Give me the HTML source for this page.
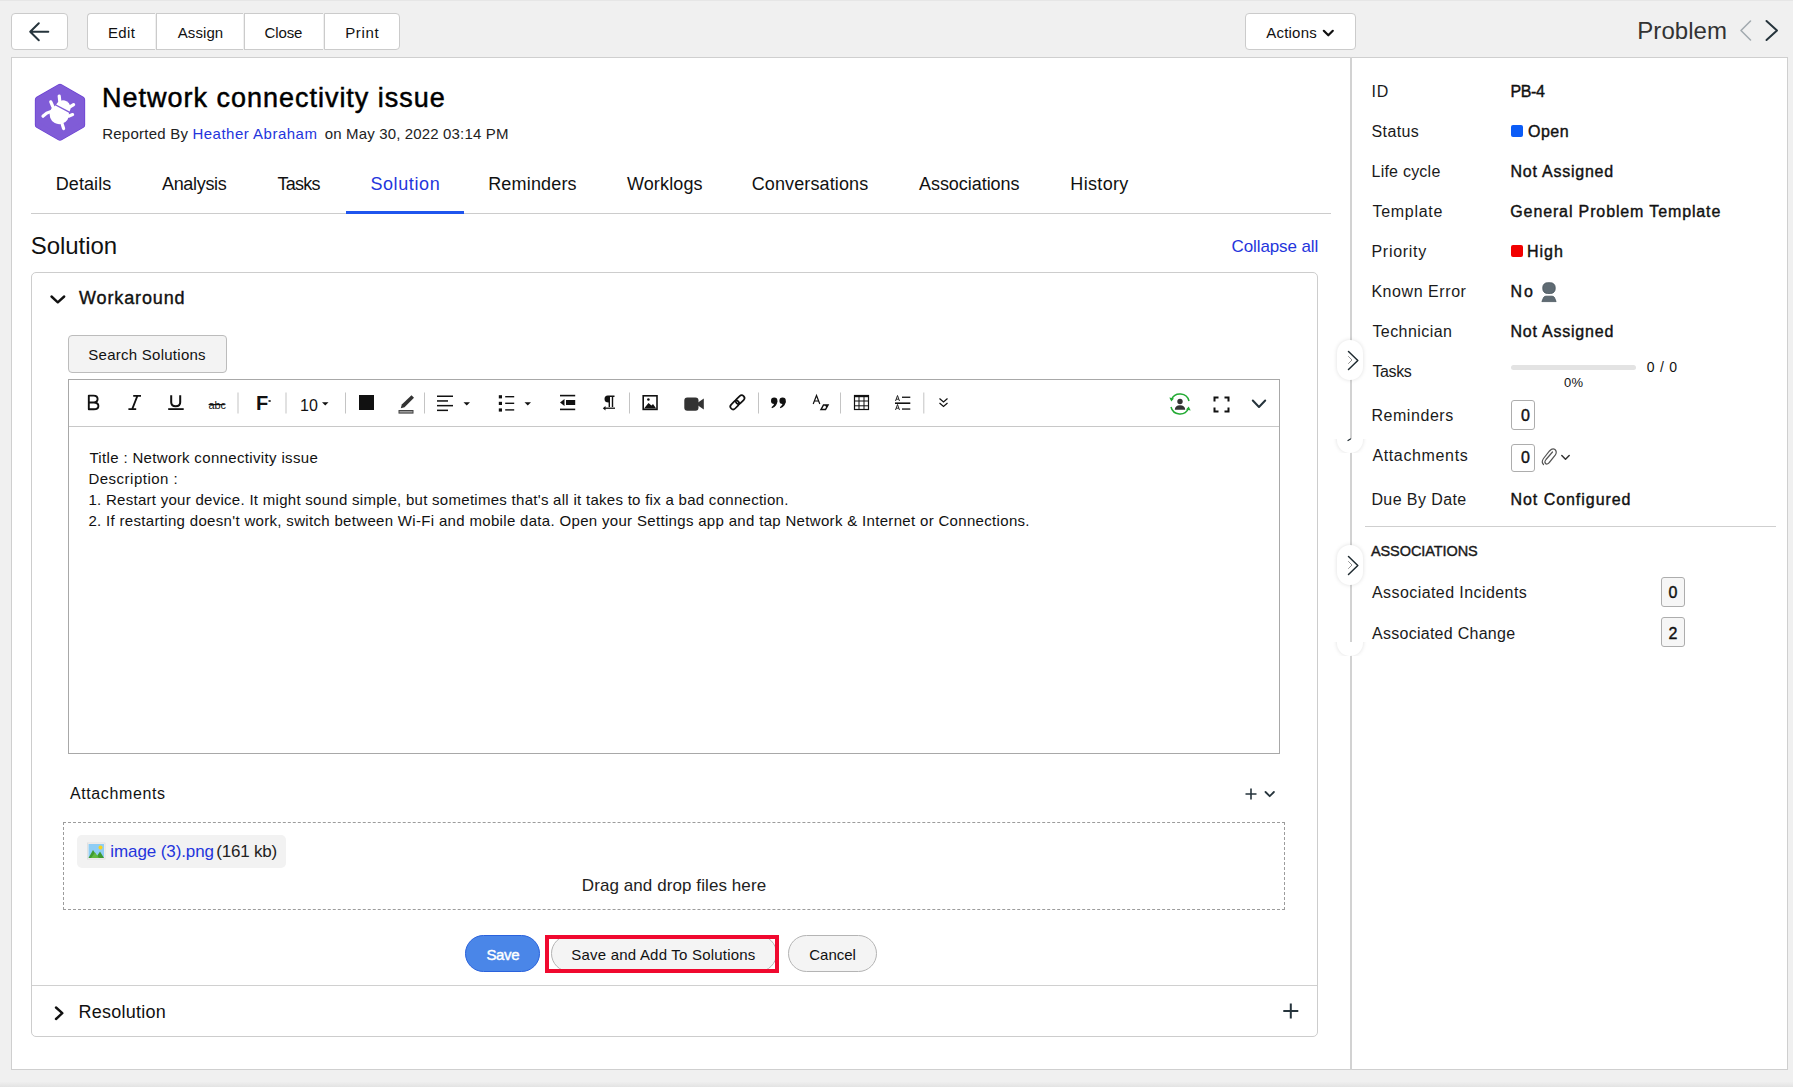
<!DOCTYPE html>
<html><head><meta charset="utf-8"><title>Problem</title>
<style>
html,body{margin:0;padding:0}
body{width:1793px;height:1087px;background:#f0f0f0;position:relative;overflow:hidden;font-family:"Liberation Sans",sans-serif}
.a{position:absolute}
.t{position:absolute;white-space:nowrap;line-height:1}
svg{position:absolute;left:0;top:0;overflow:visible}
</style></head><body>
<div class="a" style="left:0px;top:0px;width:1793px;height:1px;background:#e6e6e6"></div>
<div class="a" style="left:0px;top:1082px;width:1793px;height:5px;background:linear-gradient(#efefef,#e3e3e3)"></div>
<div class="a" style="left:11px;top:57px;width:1777px;height:1013px;background:#fff;border:1px solid #cfcfcf;box-sizing:border-box"></div>
<div class="a" style="left:11px;top:13px;width:57px;height:37px;background:#fff;border:1px solid #cbcbcb;border-radius:4px;box-sizing:border-box"></div>
<div class="a" style="left:87px;top:13px;width:68px;height:37px;background:#fff;border:1px solid #cbcbcb;border-right:none;border-radius:4px 0 0 4px;box-sizing:border-box"></div>
<div class="a" style="left:156px;top:13px;width:87px;height:37px;background:#fff;border:1px solid #cbcbcb;border-right:none;box-sizing:border-box"></div>
<div class="a" style="left:244px;top:13px;width:79px;height:37px;background:#fff;border:1px solid #cbcbcb;border-right:none;box-sizing:border-box"></div>
<div class="a" style="left:324px;top:13px;width:76px;height:37px;background:#fff;border:1px solid #cbcbcb;border-radius:0 4px 4px 0;box-sizing:border-box"></div>
<div class="a" style="left:1245px;top:13px;width:111px;height:37px;background:#fff;border:1px solid #cbcbcb;border-radius:4px;box-sizing:border-box"></div>
<div class="a" style="left:1350px;top:57px;width:2px;height:1013px;background:#d2d2d2"></div>
<div class="a" style="left:31px;top:213px;width:1300px;height:1px;background:#cccccc"></div>
<div class="a" style="left:346px;top:211px;width:118px;height:3px;background:#1f55ee"></div>
<div class="a" style="left:31px;top:272px;width:1287px;height:765px;border:1px solid #cdcdcd;border-radius:5px;box-sizing:border-box"></div>
<div class="a" style="left:32px;top:985px;width:1285px;height:1px;background:#d0d0d0"></div>
<div class="a" style="left:68px;top:335px;width:159px;height:38px;background:#f3f3f3;border:1px solid #bcbcbc;border-radius:4px;box-sizing:border-box"></div>
<div class="a" style="left:68px;top:379px;width:1212px;height:375px;border:1px solid #a8a8a8;box-sizing:border-box"></div>
<div class="a" style="left:69px;top:426px;width:1210px;height:1px;background:#c8c8c8"></div>
<div class="a" style="left:63px;top:822px;width:1222px;height:88px;border:1px dashed #9c9c9c;box-sizing:border-box"></div>
<div class="a" style="left:77px;top:835px;width:209px;height:33px;background:#f2f2f2;border-radius:5px"></div>
<div class="a" style="left:465px;top:935px;width:75px;height:37px;background:#4a86e8;border:1px solid #2a62dc;border-radius:19px;box-sizing:border-box"></div>
<div class="a" style="left:551px;top:935px;width:226px;height:37px;background:#f4f4f4;border:1px solid #b4b4b4;border-radius:19px;box-sizing:border-box"></div>
<div class="a" style="left:788px;top:935px;width:89px;height:37px;background:#f4f4f4;border:1px solid #b4b4b4;border-radius:19px;box-sizing:border-box"></div>
<div class="a" style="left:545px;top:935px;width:234px;height:38px;border:4px solid #f0092f;box-sizing:border-box"></div>
<div class="a" style="left:1365px;top:526px;width:411px;height:1px;background:#cfcfcf"></div>
<div class="a" style="left:1511px;top:125px;width:12px;height:12px;background:#0b5cf7;border-radius:2px"></div>
<div class="a" style="left:1511px;top:245px;width:12px;height:12px;background:#f20000;border-radius:2px"></div>
<div class="a" style="left:1511px;top:365px;width:125px;height:5px;background:#e3e3e3;border-radius:3px"></div>
<div class="a" style="left:1511px;top:400px;width:24px;height:30px;background:#fff;border:1px solid #adadad;border-radius:3px;box-sizing:border-box"></div>
<div class="a" style="left:1511px;top:444px;width:24px;height:28px;background:#fff;border:1px solid #adadad;border-radius:3px;box-sizing:border-box"></div>
<div class="a" style="left:1661px;top:577px;width:24px;height:30px;background:#f6f6f6;border:1px solid #adadad;border-radius:3px;box-sizing:border-box"></div>
<div class="a" style="left:1661px;top:617px;width:24px;height:30px;background:#f6f6f6;border:1px solid #adadad;border-radius:3px;box-sizing:border-box"></div>
<div class="a" style="left:1337px;top:340px;width:26px;height:40px;background:#fff;border-radius:13px;box-shadow:0 0 4px rgba(0,0,0,0.13)"></div>
<div class="a" style="left:1337px;top:545px;width:26px;height:40px;background:#fff;border-radius:13px;box-shadow:0 0 4px rgba(0,0,0,0.13)"></div>
<div class="a" style="left:1330px;top:439px;width:40px;height:14px;overflow:hidden"><div class="a" style="left:7px;top:-26px;width:26px;height:40px;background:#fff;border-radius:13px;box-shadow:0 0 4px rgba(0,0,0,0.13)"></div></div>
<div class="a" style="left:1330px;top:642px;width:40px;height:14px;overflow:hidden"><div class="a" style="left:7px;top:-26px;width:26px;height:40px;background:#fff;border-radius:13px;box-shadow:0 0 4px rgba(0,0,0,0.13)"></div></div>
<div class="t" style="left:108.0px;top:25.0px;font-size:15px;color:#111;letter-spacing:0.333px">Edit</div>
<div class="t" style="left:177.7px;top:25.0px;font-size:15px;color:#111;letter-spacing:0.100px">Assign</div>
<div class="t" style="left:264.6px;top:25.0px;font-size:15px;color:#111;letter-spacing:-0.150px">Close</div>
<div class="t" style="left:345.2px;top:25.0px;font-size:15px;color:#111;letter-spacing:0.675px">Print</div>
<div class="t" style="left:1266.2px;top:25.0px;font-size:15px;color:#111;letter-spacing:0.233px">Actions</div>
<div class="t" style="left:1637.3px;top:19.0px;font-size:24px;color:#333;letter-spacing:0.050px">Problem</div>
<div class="t" style="left:102.0px;top:85.0px;font-size:27px;color:#000;-webkit-text-stroke:0.50px #000;letter-spacing:0.988px">Network connectivity issue</div>
<div class="t" style="left:102.2px;top:126.0px;font-size:15px;color:#222;letter-spacing:0.250px">Reported By</div>
<div class="t" style="left:192.4px;top:126.0px;font-size:15px;color:#2435dc;letter-spacing:0.500px">Heather Abraham</div>
<div class="t" style="left:324.7px;top:126.0px;font-size:15px;color:#222;letter-spacing:0.157px">on May 30, 2022 03:14 PM</div>
<div class="t" style="left:55.7px;top:175.0px;font-size:18px;color:#111;letter-spacing:0.100px">Details</div>
<div class="t" style="left:162.0px;top:175.0px;font-size:18px;color:#111;letter-spacing:-0.329px">Analysis</div>
<div class="t" style="left:277.5px;top:175.0px;font-size:18px;color:#111;letter-spacing:-0.725px">Tasks</div>
<div class="t" style="left:370.4px;top:175.0px;font-size:18px;color:#2435dc;letter-spacing:0.600px">Solution</div>
<div class="t" style="left:488.2px;top:175.0px;font-size:18px;color:#111;letter-spacing:0.175px">Reminders</div>
<div class="t" style="left:626.9px;top:175.0px;font-size:18px;color:#111;letter-spacing:0.143px">Worklogs</div>
<div class="t" style="left:751.7px;top:175.0px;font-size:18px;color:#111;letter-spacing:0.125px">Conversations</div>
<div class="t" style="left:919.0px;top:175.0px;font-size:18px;color:#111;letter-spacing:-0.045px">Associations</div>
<div class="t" style="left:1070.3px;top:175.0px;font-size:18px;color:#111;letter-spacing:0.333px">History</div>
<div class="t" style="left:30.7px;top:234.0px;font-size:24px;color:#111;letter-spacing:-0.043px">Solution</div>
<div class="t" style="left:1231.6px;top:238.0px;font-size:17px;color:#2435dc;letter-spacing:-0.118px">Collapse all</div>
<div class="t" style="left:79.0px;top:288.5px;font-size:18px;color:#111;-webkit-text-stroke:0.40px #111;letter-spacing:0.878px">Workaround</div>
<div class="t" style="left:88.3px;top:347.0px;font-size:15px;color:#111;letter-spacing:0.260px">Search Solutions</div>
<div class="t" style="left:300.0px;top:398.0px;font-size:16px;color:#111">10</div>
<div class="t" style="left:89.4px;top:450.0px;font-size:15px;color:#111;letter-spacing:0.345px">Title : Network connectivity issue</div>
<div class="t" style="left:88.4px;top:471.0px;font-size:15px;color:#111;letter-spacing:0.500px">Description :</div>
<div class="t" style="left:88.4px;top:492.0px;font-size:15px;color:#111;letter-spacing:0.282px">1. Restart your device. It might sound simple, but sometimes that&#x27;s all it takes to fix a bad connection.</div>
<div class="t" style="left:88.4px;top:512.5px;font-size:15px;color:#111;letter-spacing:0.322px">2. If restarting doesn&#x27;t work, switch between Wi-Fi and mobile data. Open your Settings app and tap Network &amp; Internet or Connections.</div>
<div class="t" style="left:69.9px;top:786.0px;font-size:16px;color:#111;letter-spacing:0.620px">Attachments</div>
<div class="t" style="left:110.3px;top:843.0px;font-size:17px;color:#2435dc;letter-spacing:-0.100px">image (3).png</div>
<div class="t" style="left:216.3px;top:843.0px;font-size:17px;color:#222;letter-spacing:-0.200px">(161 kb)</div>
<div class="t" style="left:581.8px;top:877.0px;font-size:17px;color:#222;letter-spacing:0.083px">Drag and drop files here</div>
<div class="t" style="left:486.5px;top:947.0px;font-size:15px;color:#fff;-webkit-text-stroke:0.40px #fff;letter-spacing:-0.400px">Save</div>
<div class="t" style="left:571.3px;top:947.0px;font-size:15px;color:#111;letter-spacing:0.208px">Save and Add To Solutions</div>
<div class="t" style="left:809.3px;top:947.0px;font-size:15px;color:#111;letter-spacing:-0.020px">Cancel</div>
<div class="t" style="left:78.6px;top:1003.0px;font-size:18px;color:#111;letter-spacing:0.222px">Resolution</div>
<div class="t" style="left:1371.5px;top:84.0px;font-size:16px;color:#1a1a1a;letter-spacing:0.700px">ID</div>
<div class="t" style="left:1371.5px;top:123.5px;font-size:16px;color:#1a1a1a;letter-spacing:0.400px">Status</div>
<div class="t" style="left:1371.5px;top:163.5px;font-size:16px;color:#1a1a1a;letter-spacing:0.233px">Life cycle</div>
<div class="t" style="left:1372.5px;top:203.5px;font-size:16px;color:#1a1a1a;letter-spacing:0.714px">Template</div>
<div class="t" style="left:1371.5px;top:243.7px;font-size:16px;color:#1a1a1a;letter-spacing:0.700px">Priority</div>
<div class="t" style="left:1371.4px;top:284.0px;font-size:16px;color:#1a1a1a;letter-spacing:0.560px">Known Error</div>
<div class="t" style="left:1372.4px;top:323.5px;font-size:16px;color:#1a1a1a;letter-spacing:0.433px">Technician</div>
<div class="t" style="left:1372.4px;top:363.5px;font-size:16px;color:#1a1a1a;letter-spacing:-0.375px">Tasks</div>
<div class="t" style="left:1371.4px;top:407.5px;font-size:16px;color:#1a1a1a;letter-spacing:0.562px">Reminders</div>
<div class="t" style="left:1372.4px;top:448.0px;font-size:16px;color:#1a1a1a;letter-spacing:0.640px">Attachments</div>
<div class="t" style="left:1371.4px;top:492.0px;font-size:16px;color:#1a1a1a;letter-spacing:0.410px">Due By Date</div>
<div class="t" style="left:1370.9px;top:544.0px;font-size:14.5px;color:#1a1a1a;-webkit-text-stroke:0.40px #1a1a1a;letter-spacing:-0.073px">ASSOCIATIONS</div>
<div class="t" style="left:1372.0px;top:585.0px;font-size:16px;color:#1a1a1a;letter-spacing:0.421px">Associated Incidents</div>
<div class="t" style="left:1372.0px;top:625.5px;font-size:16px;color:#1a1a1a;letter-spacing:0.269px">Associated Change</div>
<div class="t" style="left:1510.4px;top:84.0px;font-size:16px;color:#111;-webkit-text-stroke:0.40px #111;letter-spacing:-0.333px">PB-4</div>
<div class="t" style="left:1528.0px;top:123.5px;font-size:16px;color:#111;-webkit-text-stroke:0.40px #111;letter-spacing:0.467px">Open</div>
<div class="t" style="left:1510.4px;top:163.5px;font-size:16px;color:#111;-webkit-text-stroke:0.40px #111;letter-spacing:0.773px">Not Assigned</div>
<div class="t" style="left:1510.3px;top:203.5px;font-size:16px;color:#111;-webkit-text-stroke:0.40px #111;letter-spacing:0.870px">General Problem Template</div>
<div class="t" style="left:1527.0px;top:243.7px;font-size:16px;color:#111;-webkit-text-stroke:0.40px #111;letter-spacing:1.000px">High</div>
<div class="t" style="left:1510.5px;top:284.0px;font-size:16px;color:#111;-webkit-text-stroke:0.40px #111;letter-spacing:2.000px">No</div>
<div class="t" style="left:1510.5px;top:323.5px;font-size:16px;color:#111;-webkit-text-stroke:0.40px #111;letter-spacing:0.773px">Not Assigned</div>
<div class="t" style="left:1646.8px;top:359.5px;font-size:14px;color:#111;letter-spacing:0.750px">0 / 0</div>
<div class="t" style="left:1564.0px;top:375.6px;font-size:13px;color:#111;letter-spacing:0.200px">0%</div>
<div class="t" style="left:1521.0px;top:407.5px;font-size:16px;color:#111;-webkit-text-stroke:0.40px #111">0</div>
<div class="t" style="left:1521.0px;top:450.0px;font-size:16px;color:#111;-webkit-text-stroke:0.40px #111">0</div>
<div class="t" style="left:1510.5px;top:492.0px;font-size:16px;color:#111;-webkit-text-stroke:0.40px #111;letter-spacing:0.954px">Not Configured</div>
<div class="t" style="left:1668.5px;top:585.0px;font-size:16px;color:#111;-webkit-text-stroke:0.40px #111">0</div>
<div class="t" style="left:1668.5px;top:625.5px;font-size:16px;color:#111;-webkit-text-stroke:0.40px #111">2</div>
<svg width="1793" height="1087" viewBox="0 0 1793 1087">
<g fill="none" stroke-linecap="round" stroke-linejoin="round">
 <!-- back arrow -->
 <path d="M48.3 31.7H30.2M38.8 23.2L30.2 31.7L38.8 40.3" stroke="#26343c" stroke-width="2"/>
 <!-- actions chevron -->
 <path d="M1323.8 30.8L1328.3 35.3L1332.8 30.8" stroke="#111" stroke-width="2.2"/>
 <!-- problem nav -->
 <path d="M1750.5 21L1741 30.5L1750.5 40" stroke="#a3abb0" stroke-width="1.6"/>
 <path d="M1766.5 21L1777 30.5L1766.5 40" stroke="#26343c" stroke-width="2"/>
</g>
<!-- hexagon -->
<path d="M60 87.1L81.85 99.7V124.9L60 137.5L38.15 124.9V99.7Z" fill="#6a40d2" stroke="#6a40d2" stroke-width="6.6" stroke-linejoin="round"/>
<path d="M60 87.1L81.85 99.7V124.9L60 137.5L38.15 124.9V99.7Z" fill="#805cd7" stroke="#805cd7" stroke-width="5.2" stroke-linejoin="round"/>
<!-- bug -->
<g fill="#fff">
 <path d="M55.4 105.6 L68.9 112.8 A9.7 9.7 0 1 1 55.4 105.6 Z"/>
 <path d="M56.2 104.4 A7.6 7.6 0 0 1 69.6 111.6 Z"/>
 <g fill="none" stroke="#fff" stroke-width="3.2" stroke-linecap="round">
  <path d="M59.8 101.5 L59.2 96"/>
  <path d="M52.8 106.5 L50.8 101.8"/>
  <path d="M51 111.5 Q46.5 112.5 43 116.2"/>
  <path d="M69.5 107.2 L73.6 104.6"/>
  <path d="M68.6 116.2 L72.6 114.6"/>
  <path d="M62 123.5 L63.6 128.6"/>
 </g>
</g>
<!-- workaround chevron -->
<path d="M51.5 296.5L57.8 302.3L64.2 296.5" fill="none" stroke="#111" stroke-width="2.4" stroke-linecap="round" stroke-linejoin="round"/>
<!-- resolution chevron -->
<path d="M56 1007.5L62.3 1013.2L56 1019" fill="none" stroke="#111" stroke-width="2.4" stroke-linecap="round" stroke-linejoin="round"/>
<!-- plus icons -->
<path d="M1251 788.5V799.5M1245.5 794H1256.5" stroke="#26343c" stroke-width="1.6"/>
<path d="M1265.5 792L1269.7 796.2L1273.9 792" fill="none" stroke="#26343c" stroke-width="1.8" stroke-linecap="round" stroke-linejoin="round"/>
<path d="M1290.8 1003.5V1018.5M1283.3 1011H1298.3" stroke="#26343c" stroke-width="2"/>
<!-- toolbar -->
<g fill="#111">
 <path d="M88.8 395.6H93.6Q97.6 395.6 97.6 399.1Q97.6 402.3 93.8 402.5Q98.4 402.7 98.4 405.9Q98.4 409.3 93.8 409.3H88.8Z M88.8 402.5H93.8" fill="none" stroke="#111" stroke-width="1.9" stroke-linejoin="round"/>
 <path d="M133.2 395.8H141M128.4 409.2H136.2M137.4 395.8L132.2 409.2" fill="none" stroke="#111" stroke-width="1.8"/>
 <path d="M171.2 395.2V402.3Q171.2 406.3 175.7 406.3Q180.2 406.3 180.2 402.3V395.2" fill="none" stroke="#111" stroke-width="2"/>
 <rect x="168.2" y="408.2" width="15.5" height="1.8"/>
 <text x="208.6" y="408.9" font-family="Liberation Sans" font-size="11" letter-spacing="-0.2">abc</text>
 <rect x="208.6" y="404" width="16.2" height="1.2"/>
 <text x="256" y="410" font-family="Liberation Sans" font-weight="bold" font-size="20">F</text>
 <rect x="268.5" y="400.2" width="2.2" height="1.6"/>
 <path d="M322 402.3H328.5L325.25 405.5Z"/>
 <rect x="359" y="395" width="15" height="15"/>
 <path d="M411.5 395.2 L414 397.7 L404.5 407.2 L400.8 408.2 L401.8 404.5 Z" fill="#333"/>
 <rect x="399" y="410.5" width="14" height="2.6" fill="#999" stroke="#444" stroke-width="1"/>
 <rect x="437" y="395.5" width="16" height="1.5"/>
 <rect x="437" y="400.2" width="11" height="1.5"/>
 <rect x="437" y="404.9" width="16" height="1.5"/>
 <rect x="437" y="409.6" width="11" height="1.5"/>
 <path d="M463.5 402.3H470L466.75 405.5Z"/>
 <rect x="498.8" y="395.2" width="3.2" height="3.2"/>
 <rect x="498.8" y="401.8" width="3.2" height="3.2"/>
 <rect x="498.8" y="408.4" width="3.2" height="3.2"/>
 <rect x="505.2" y="396" width="9" height="1.4"/>
 <rect x="505.2" y="402.6" width="9" height="1.4"/>
 <rect x="505.2" y="409.2" width="9" height="1.4"/>
 <path d="M524.5 402.3H531L527.75 405.5Z"/>
 <rect x="560" y="394.8" width="15.2" height="1.6"/>
 <rect x="560" y="408.6" width="15.2" height="1.6"/>
 <path d="M560 402.5L564.5 399V406Z"/>
 <rect x="566" y="400" width="9.2" height="5"/>
 <path d="M607.8 395.5H614.5V397H613.2V407H611.8V397H610V407H608.6V402.5Q604.5 402.5 604.5 399Q604.5 395.5 607.8 395.5Z"/>
 <path d="M615 408.2H605" stroke="#111" stroke-width="1.3"/>
 <path d="M602.8 408.2L605.5 406V410.4Z"/>
 <rect x="643.2" y="395.8" width="13.8" height="13.6" fill="none" stroke="#111" stroke-width="1.6"/>
 <path d="M644 408.6L648.5 403L651.5 405.5L653 404L656.2 408.6Z"/>
 <circle cx="648.4" cy="399.5" r="1.3"/>
 <rect x="684.3" y="397.4" width="14.2" height="13.3" rx="3" fill="#333"/>
 <path d="M698 402.5L703.8 398.5V409.6L698 405.6Z" fill="#333"/>
 <g fill="none" stroke="#111" stroke-width="1.7" transform="rotate(-45 737.4 402.3)">
  <rect x="728.6" y="399.5" width="10" height="5.6" rx="2.8"/>
  <rect x="736.2" y="399.5" width="10" height="5.6" rx="2.8"/>
 </g>
 <circle cx="774.2" cy="400.8" r="3.2"/>
 <path d="M777.3 401Q777.5 406 772 408.3L771.5 407.2Q774.2 405.5 774.5 402.5Z"/>
 <circle cx="782.6" cy="400.8" r="3.2"/>
 <path d="M785.7 401Q785.9 406 780.4 408.3L779.9 407.2Q782.6 405.5 782.9 402.5Z"/>
 <path d="M813.2 404L816.5 395.5L819.8 404" fill="none" stroke="#111" stroke-width="1.2"/>
 <path d="M814.5 401H818.5" stroke="#111" stroke-width="1.1"/>
 <path d="M821 409.5L823.5 405H828L825.5 409.5Z" fill="none" stroke="#111" stroke-width="1.5"/>
 <path d="M825 405H828L826.5 408Z"/>
 <rect x="854.5" y="395.5" width="14" height="14" fill="none" stroke="#111" stroke-width="1.2"/>
 <rect x="854" y="395" width="15" height="2.2"/>
 <rect x="854" y="400.5" width="15" height="1"/>
 <rect x="854" y="405.3" width="15" height="1"/>
 <rect x="858.5" y="395" width="1" height="15"/>
 <rect x="863.5" y="395" width="1" height="15"/>
 <path d="M895.5 401L897.5 395.5L899.5 401M895.5 410L897.5 404.5L899.5 410M896.2 399.2H898.8M896.2 408.2H898.8" fill="none" stroke="#111" stroke-width="0.9"/>
 <rect x="895" y="402.4" width="15.3" height="1.6"/>
 <rect x="902" y="396.6" width="8.3" height="1.3"/>
 <rect x="902" y="408.4" width="8.3" height="1.3"/>
 <path d="M939.5 398.5L943.5 402L947.5 398.5M939.5 403L943.5 406.5L947.5 403" fill="none" stroke="#111" stroke-width="1.2"/>
</g>
<!-- toolbar separators -->
<g fill="#c4c4c4">
 <rect x="237.5" y="392.5" width="1" height="21"/>
 <rect x="285.5" y="392.5" width="1" height="21"/>
 <rect x="345" y="392.5" width="1" height="21"/>
 <rect x="424" y="392.5" width="1" height="21"/>
 <rect x="629" y="392.5" width="1" height="21"/>
 <rect x="758" y="392.5" width="1" height="21"/>
 <rect x="840" y="392.5" width="1" height="21"/>
 <rect x="923.3" y="392.5" width="1" height="21"/>
</g>
<!-- right toolbar icons -->
<path d="M1171.5 399.5A9.3 9.3 0 0 1 1189 401M1188.5 408.5A9.3 9.3 0 0 1 1171 407" fill="none" stroke="#22aa33" stroke-width="1.5"/>
<path d="M1169.3 397.5L1171.3 401.5L1174 398.5Z M1190.7 410.5L1188.7 406.5L1186 409.5Z" fill="#22aa33"/>
<circle cx="1180" cy="401.5" r="2.7" fill="#333"/>
<path d="M1174.8 409.8Q1175 405.3 1180 405.3Q1185 405.3 1185.2 409.8Z" fill="#333"/>
<path d="M1214.5 401.5V397.5H1218.5M1224.5 397.5H1228.5V401.5M1228.5 407.5V411.5H1224.5M1218.5 411.5H1214.5V407.5" fill="none" stroke="#111" stroke-width="2"/>
<path d="M1252.8 400.5L1259 407L1265.2 400.5" fill="none" stroke="#26343c" stroke-width="2" stroke-linecap="round" stroke-linejoin="round"/>
<!-- person icon known error -->
<rect x="1542.8" y="282.7" width="12.4" height="10.8" rx="4.6" fill="#5f6b73" stroke="#48545c" stroke-width="0.8"/>
<path d="M1541.9 301.6L1543.6 297.4Q1544.3 296.2 1546 296.2H1552Q1553.7 296.2 1554.4 297.4L1556.1 301.6Z" fill="#5f6b73" stroke="#48545c" stroke-width="0.8" stroke-linejoin="round"/>
<!-- paperclip -->
<path d="M1552.5 452L1546 459.5Q1544 462 1545.5 463.5Q1547 465 1549.3 462.5L1555 455.5Q1557.5 452 1555 449.5Q1552.5 447.5 1549.5 451L1543.5 458.5Q1541 462 1543.5 464.5" fill="none" stroke="#555" stroke-width="1.2" stroke-linecap="round"/>
<path d="M1561.8 455.5L1565.5 459.2L1569.2 455.5" fill="none" stroke="#333" stroke-width="1.5" stroke-linecap="round" stroke-linejoin="round"/>
<!-- handle chevrons -->
<g fill="none" stroke="#1e2a30" stroke-linecap="round" stroke-linejoin="round">
 <path d="M1348.5 351.5L1357.8 360.5L1348.5 369.5" stroke-width="1.5"/>
 <path d="M1348.5 356.5L1352 360L1348.5 363.5" stroke-width="0.8" stroke="#777"/>
 <path d="M1348.5 556.5L1357.8 565.5L1348.5 574.5" stroke-width="1.5"/>
 <path d="M1348.5 561.5L1352 565L1348.5 568.5" stroke-width="0.8" stroke="#777"/>
 <path d="M1348 440.5L1350.5 439" stroke-width="1.2"/>
</g>
<!-- chip image icon -->
<rect x="87.5" y="843" width="17.5" height="16" fill="#f8f4f0" stroke="#ddd" stroke-width="0.8"/>
<rect x="88.5" y="844" width="15.5" height="14" fill="#8ecdf5"/>
<circle cx="100.5" cy="847.5" r="2" fill="#f7d31e"/>
<path d="M88.5 858L93 850L97 856L100 851.5L104 858Z" fill="#3e9a2f"/>
<path d="M91 858L95 852.5L99 858Z" fill="#5fb83e"/>
</svg>

</body></html>
